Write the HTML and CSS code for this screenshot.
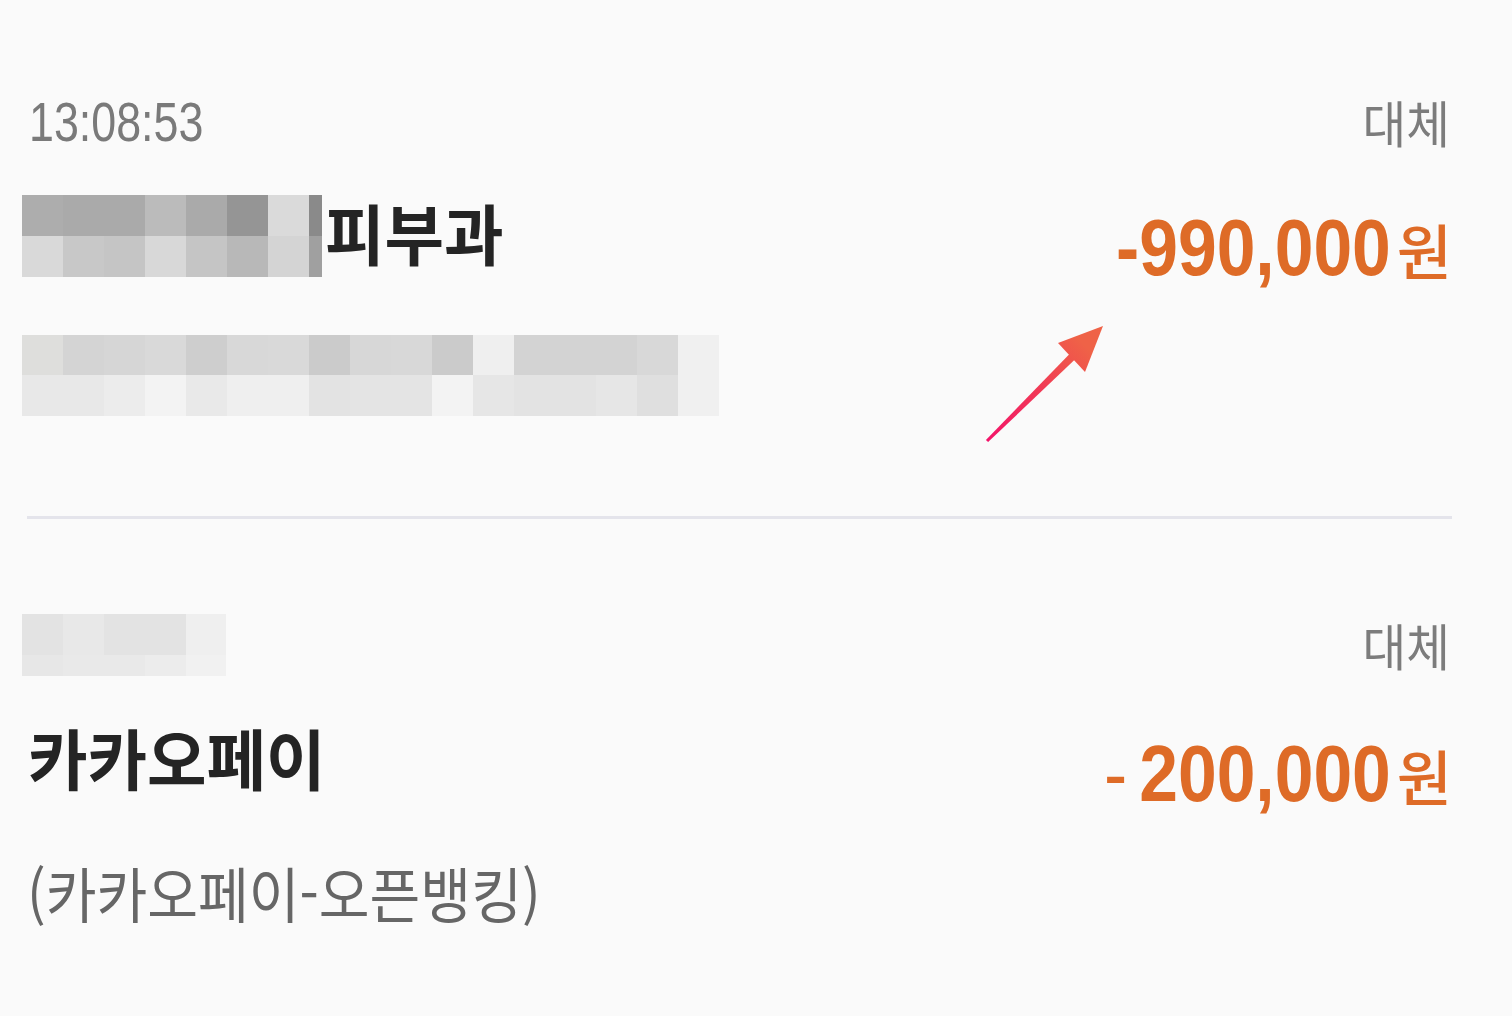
FILE: index.html
```html
<!DOCTYPE html>
<html lang="ko">
<head>
  <meta charset="UTF-8">
  <title>거래내역</title>
  <link rel="stylesheet" href="styles.css">
</head>
<body>
  <div class="list">
    <div class="tx tx-first">
      <div class="row meta">
        <div class="time"><span class="squeeze">13:08:53</span></div>
        <div class="kind"><span class="squeeze">대체</span></div>
      </div>
      <div class="row main">
        <div class="name"><span class="mosaic mosaic-name"></span><span class="squeeze">피부과</span></div>
        <div class="amount"><span class="num">-990,000</span><span class="won">원</span></div>
      </div>
      <div class="mosaic mosaic-memo"></div>
    </div>

    <div class="divider"></div>

    <div class="tx tx-second">
      <div class="row meta">
        <div class="mosaic mosaic-time"></div>
        <div class="kind kind-low"><span class="squeeze">대체</span></div>
      </div>
      <div class="row main">
        <div class="name"><span class="squeeze">카카오페이</span></div>
        <div class="amount amount-low"><span class="num"><span class="minus">-</span>200,000</span><span class="won">원</span></div>
      </div>
      <div class="memo"><span class="squeeze">(카카오페이-오픈뱅킹)</span></div>
    </div>

    <!-- 강조 화살표 -->
    <svg class="arrow" width="130" height="130" viewBox="0 0 130 130">
      <defs>
        <linearGradient id="arrow-grad" gradientUnits="userSpaceOnUse" x1="7" y1="121" x2="105" y2="25">
          <stop offset="0" stop-color="#f3146a"/>
          <stop offset="0.55" stop-color="#f13a55"/>
          <stop offset="1" stop-color="#ef6247"/>
        </linearGradient>
      </defs>
      <polygon points="8.1,122.1 5.9,119.9 92.2,31.2 97.8,36.8" fill="url(#arrow-grad)"/>
      <polygon points="123,6 78,23 105,52" fill="url(#arrow-grad)"/>
    </svg>
  </div>
</body>
</html>
```
FILE: styles.css
```css
html, body {
  margin: 0;
  height: 100%;
}
body {
  background-color: #fafafa;
  font-family: "Noto Sans CJK KR", "Noto Sans", sans-serif;
  overflow: hidden;
}
.list {
  position: relative;
  padding: 0 60px 0 22px;
}
.row {
  display: flex;
  justify-content: space-between;
}
.squeeze {
  display: inline-block;
  transform-origin: left center;
}
.tx-first {
  padding-top: 92px;
  height: 424px;
  box-sizing: border-box;
}
.meta {
  height: 58px;
  align-items: center;
}
.time {
  font-family: "Liberation Sans", Arial, sans-serif;
  font-size: 56px;
  color: #7a7a7a;
  padding-left: 7px;
}
.time .squeeze {
  transform: scaleX(0.8);
}
.kind {
  font-size: 50px;
  color: #7c7c7c;
  padding-right: 2px;
}
.kind .squeeze {
  transform-origin: right center;
  transform: scaleX(0.95);
}
.main {
  align-items: center;
}
.tx-first .main {
  margin-top: 45px;
  height: 82px;
}
.name {
  display: flex;
  align-items: center;
  font-size: 66px;
  font-weight: 700;
  color: #242424;
}
.name .squeeze {
  transform: scaleX(0.98);
  margin-top: -10px;
}
.amount {
  display: flex;
  align-items: baseline;
  margin-top: 24px;
  color: #de6b27;
}
.num {
  display: inline-block;
  font-family: "Liberation Sans", Arial, sans-serif;
  font-weight: 700;
  font-size: 80px;
  transform-origin: right center;
  transform: scaleX(0.87);
  margin-right: -8px;
}
.won {
  font-weight: 500;
  font-size: 60px;
  margin-left: 14px;
}
.minus {
  font-weight: 400;
  margin-right: 14px;
}

/* 모자이크 처리 */
.mosaic {
  display: block;
  flex-shrink: 0;
}
.mosaic-name {
  width: 300px;
  height: 82px;
  margin-right: 3px;
  background:
    linear-gradient(to right, #adadad 0 41px, #aaaaaa 41px 123px, #bbbbbb 123px 164px, #aaaaaa 164px 205px, #959595 205px 246px, #dadada 246px 287px, #8a8a8a 287px) top / 100% 41px no-repeat,
    linear-gradient(to right, #d9d9d9 0 41px, #c8c8c8 41px 82px, #c5c5c5 82px 123px, #d8d8d8 123px 164px, #c5c5c5 164px 205px, #b8b8b8 205px 246px, #d4d4d4 246px 287px, #a0a0a0 287px) bottom / 100% 41px no-repeat;
}
.mosaic-memo {
  width: 697px;
  height: 81px;
  margin-top: 58px;
  background:
    linear-gradient(to right, #dededc 0 41px, #d4d4d4 41px 82px, #d6d6d6 82px 123px, #d9d9d9 123px 164px, #cecece 164px 205px, #d8d8d8 205px 246px, #d9d9d9 246px 287px, #cbcbcb 287px 328px, #d7d7d7 328px 369px, #d8d8d8 369px 410px, #cbcbcb 410px 451px, #efefef 451px 492px, #d3d3d3 492px 615px, #d8d8d8 615px 656px, #f0f0f0 656px) top / 100% 40px no-repeat,
    linear-gradient(to right, #e8e8e8 0 82px, #ececec 82px 123px, #f3f3f3 123px 164px, #e9e9e9 164px 205px, #efefef 205px 287px, #e3e3e3 287px 328px, #e4e4e4 328px 410px, #f3f3f3 410px 451px, #e6e6e6 451px 492px, #e3e3e3 492px 574px, #e6e6e6 574px 615px, #dfdfdf 615px 656px, #f0f0f0 656px) bottom / 100% 41px no-repeat;
}
.mosaic-time {
  width: 204px;
  height: 62px;
  background:
    linear-gradient(to right, #e3e3e3 0 41px, #e8e8e8 41px 82px, #e3e3e3 82px 164px, #efefef 164px) top / 100% 41px no-repeat,
    linear-gradient(to right, #e7e7e7 0 41px, #e9e9e9 41px 123px, #ececec 123px 164px, #f1f1f1 164px) bottom / 100% 21px no-repeat;
}

.divider {
  height: 3px;
  margin: 92px 0 0 5px;
  background-color: #e4e4eb;
}

.tx-second {
  padding-top: 95px;
}
.tx-second .meta {
  height: 62px;
  align-items: flex-end;
}
.kind-low {
  margin-bottom: -4px;
}
.tx-second .main {
  margin-top: 40px;
  height: 80px;
}
.tx-second .name {
  padding-left: 6px;
}
.tx-second .name .squeeze {
  margin-top: 0;
}
.amount-low {
  margin-top: 36px;
}
.memo {
  margin-top: 52px;
  padding-left: 5px;
  font-size: 60px;
  color: #666;
}
.memo .squeeze {
  transform: scaleX(0.92);
}

.arrow {
  position: absolute;
  left: 980px;
  top: 320px;
}
```
